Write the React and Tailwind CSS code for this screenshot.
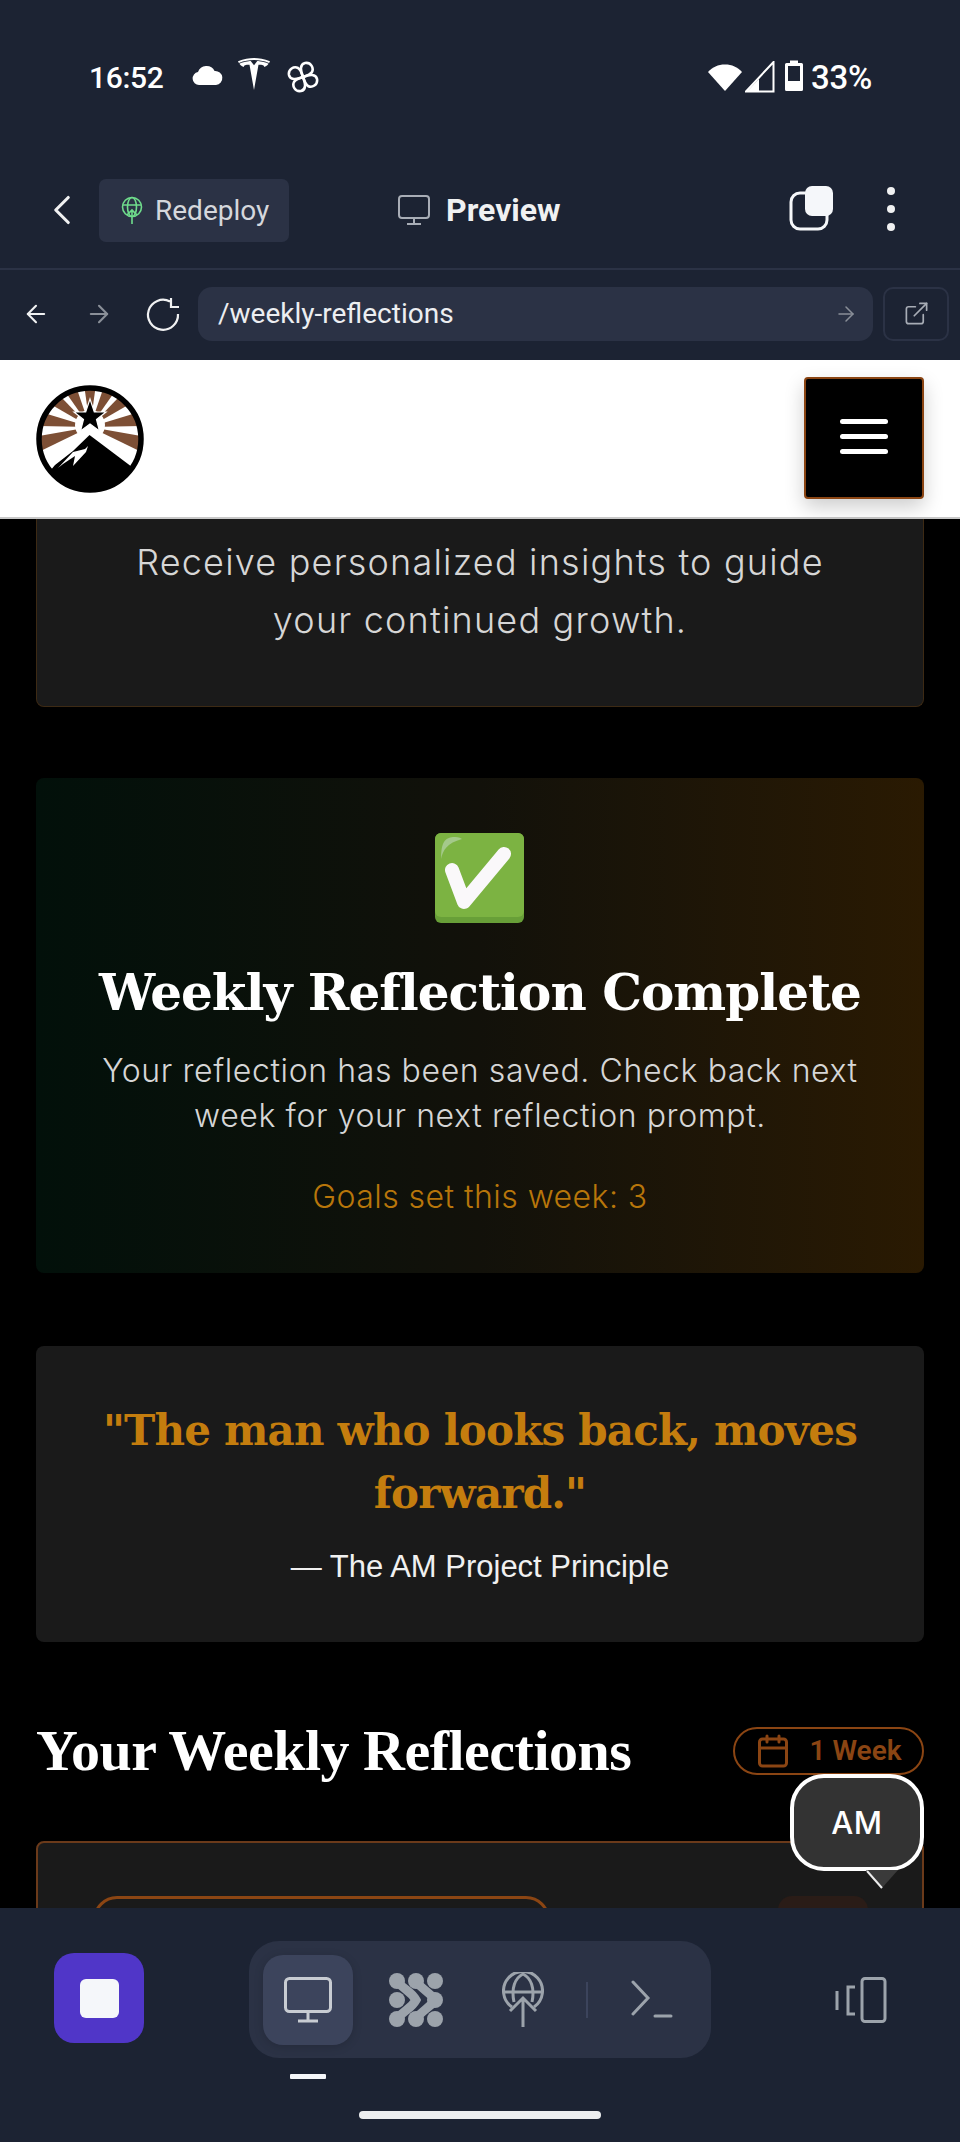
import React from "react";
import { SiTesla } from "react-icons/si";
import { ChevronLeft, ArrowLeft, ArrowRight, ExternalLink, Calendar } from "lucide-react";

const rays = [0, 27, -27, 52, -52, 81, -81, 108, -108];
const petal = "M16 16C13 9 13 3 18 2C24 1 27 7 25 11C23 14 19 15 16 16Z";

function rayPath(deg) {
  // wedge from the point behind the star out past the ring
  const toXY = (a) => {
    const r = ((a - 90) * Math.PI) / 180;
    return `${54 + 80 * Math.cos(r)} ${42 + 80 * Math.sin(r)}`;
  };
  return `M54 42L${toXY(deg - 8)}L${toXY(deg + 8)}Z`;
}

function Logo() {
  return (
    <svg width="108" height="108" viewBox="0 0 108 108">
      <defs>
        <clipPath id="disc">
          <circle cx="54" cy="54" r="51" />
        </clipPath>
      </defs>
      <circle cx="54" cy="54" r="51" fill="#fff" />
      <g clipPath="url(#disc)">
        {rays.map((d) => (
          <path key={d} d={rayPath(d)} fill="#7d4f35" />
        ))}
        <circle cx="54" cy="40" r="15" fill="#fff" />
        <path d="M54 44L100 81V110H6V86L54 44Z" fill="#fff" />
        <path d="M53.500 50L96 82V110H8V84L14 86L19 80L37 66Z" fill="#000" />
        <path d="M22 83L37 67L49 64L52 61L50 67L37 81L39 71L27 79Z" fill="#fff" />
      </g>
      <circle cx="54" cy="54" r="51" fill="none" stroke="#000" strokeWidth="5.500" />
      <path
        d="M54 14L58.300 27H70L60.500 34.500L63.500 46L54 39L44.500 46L47.500 34.500L38 27H49.700Z"
        fill="#000"
        stroke="#fff"
        strokeWidth="1.200"
      />
    </svg>
  );
}

function StatusBar() {
  return (
    <div className="h-[155px] flex justify-between pl-[89px] pr-[88px] pt-[59px] text-white font-['Roboto',sans-serif] text-[30px] leading-[38px]">
      <div className="flex items-start">
        <span className="font-medium tracking-[-0.3px]">16:52</span>
        <svg width="32" height="32" viewBox="0 0 32 32" className="ml-[27px]">
          <path d="M8 26a6.500 6.500 0 0 1-1-12.900A9 9 0 0 1 23.600 12 7 7 0 0 1 25 26Z" fill="#fff" />
        </svg>
        <SiTesla size={32} color="#fff" className="ml-[15px] -mt-[1px]" />
        <svg width="32" height="32" viewBox="0 0 32 32" fill="none" stroke="#fff" strokeWidth="2.600" className="ml-[17px] mt-[2px]">
          <path d={petal} />
          <path d={petal} transform="rotate(90 16 16)" />
          <path d={petal} transform="rotate(180 16 16)" />
          <path d={petal} transform="rotate(270 16 16)" />
        </svg>
      </div>
      <div className="flex items-start">
        <svg width="36" height="30" viewBox="0 0 36 30" className="mt-[3px]">
          <path d="M18 29L1 10C5.500 5 11 2.500 18 2.500C25 2.500 30.500 5 35 10Z" fill="#fff" />
        </svg>
        <svg width="30" height="32" viewBox="0 0 30 32" className="mt-[2px] ml-[2px]">
          <path d="M1 30.500H28.500V1Z" fill="none" stroke="#fff" strokeWidth="2" />
          <path d="M2 30.500L14 18V30.500Z" fill="#fff" />
        </svg>
        <svg width="20" height="32" viewBox="0 0 20 32" className="mt-[1px] ml-[9px]">
          <path d="M6 3V0.500H14V3H17.500A1.500 1.500 0 0 1 19 4.500V29.500A1.500 1.500 0 0 1 17.500 31H2.500A1.500 1.500 0 0 1 1 29.500V4.500A1.500 1.500 0 0 1 2.500 3Z" fill="#fff" />
          <rect x="4" y="6" width="12" height="15" fill="#1c2333" />
        </svg>
        <span className="ml-[7px] text-[33px] font-medium tracking-[-0.3px]">33%</span>
      </div>
    </div>
  );
}

function TopBar() {
  return (
    <div className="relative h-[115px] flex items-start pt-[24px] border-b-[2px] border-[#2b3245]">
      <ChevronLeft size={50} strokeWidth={1.500} color="#f0f1f2" className="ml-[37px] mt-[6px]" />
      <div className="ml-[12px] w-[190px] h-[63px] rounded-[7px] bg-[#2b3245] flex items-center pl-[21px] gap-[11px]">
        <svg width="24" height="30" viewBox="0 0 24 30" fill="none" stroke="#6fdc8c" strokeWidth="1.600">
          <circle cx="12" cy="11" r="9.500" />
          <ellipse cx="12" cy="11" rx="4.500" ry="9.500" />
          <path d="M2.500 9H21.500M12 28V14M7 19L12 14L17 19" />
        </svg>
        <span className="text-[28px] text-[#d5d7dc] font-['Roboto',sans-serif]">Redeploy</span>
      </div>
      <div className="ml-[109px] mt-[7px] flex items-center gap-[16px]">
        <svg width="32" height="32" viewBox="0 0 32 32" fill="none" stroke="#a8adb6" strokeWidth="2">
          <rect x="1" y="2" width="30" height="22" rx="3" />
          <path d="M16 24V30M9 30H23" />
        </svg>
        <span className="text-[32px] font-bold text-[#f0f1f2] font-['Roboto',sans-serif]">Preview</span>
      </div>
      <svg width="46" height="46" viewBox="0 0 46 46" className="absolute left-[789px] top-[30px]">
        <rect x="2" y="8" width="36" height="36" rx="9" fill="none" stroke="#f5f7fa" strokeWidth="3" />
        <rect x="16" y="1" width="28" height="30" rx="7" fill="#f5f7fa" />
      </svg>
      <div className="absolute left-[887px] top-[32px] flex flex-col gap-[10px]">
        <div className="w-[8px] h-[8px] rounded-full bg-[#f0f1f2]" />
        <div className="w-[8px] h-[8px] rounded-full bg-[#f0f1f2]" />
        <div className="w-[8px] h-[8px] rounded-full bg-[#f0f1f2]" />
      </div>
    </div>
  );
}

function UrlBar() {
  return (
    <div className="h-[88px] flex items-center pl-[22px] pr-[10px] pb-[1px]">
      <ArrowLeft size={28} strokeWidth={1.800} color="#f0f1f2" />
      <ArrowRight size={28} strokeWidth={1.800} color="#8a8f98" className="ml-[35px]" />
      <svg width="36" height="36" viewBox="0 0 36 36" fill="none" stroke="#f0f1f2" strokeWidth="2.200" className="ml-[32px]">
        <path d="M25 5.500A15 15 0 1 0 33 18M26 2V11H34" />
      </svg>
      <div className="ml-[17px] w-[675px] h-[54px] rounded-[14px] bg-[#2b3245] flex items-center justify-between pl-[20px] pr-[15px]">
        <span className="text-[28px] text-[#eceef1] font-['Roboto',sans-serif]">/weekly-reflections</span>
        <ArrowRight size={24} strokeWidth={1.500} color="#8a8f98" />
      </div>
      <div className="ml-[10px] w-[66px] h-[54px] rounded-[10px] border-[2px] border-[#2b3245] flex items-center justify-center">
        <ExternalLink size={27} strokeWidth={1.500} color="#a8adb6" />
      </div>
    </div>
  );
}

function AppHeader() {
  return (
    <div className="h-[159px] bg-white border-b-[2px] border-[#c8c8c8] flex items-center justify-between pl-[36px] pr-[36px] shrink-0">
      <Logo />
      <div className="w-[120px] h-[122px] bg-black border-[2px] border-[#8b4513] rounded-[4px] shadow-[0_8px_20px_rgba(0,0,0,0.2)] flex flex-col items-center gap-[10px] pt-[40px] mt-[-1px]">
        <div className="w-[48px] h-[5px] rounded-full bg-white" />
        <div className="w-[48px] h-[5px] rounded-full bg-white" />
        <div className="w-[48px] h-[5px] rounded-full bg-white" />
      </div>
    </div>
  );
}

function CheckEmoji() {
  return (
    <svg width="90" height="90" viewBox="0 0 90 90">
      <rect x="0" y="0" width="89" height="90" rx="6" fill="#689f38" />
      <rect x="0" y="0" width="89" height="84" rx="6" fill="#7cb342" />
      <path d="M18 4C10 5 6 9 6 26C8 17 12 10 27 6C24 4 21 4 18 4Z" fill="#a4c98a" />
      <path d="M17 37L29 69L69 21" fill="none" stroke="#faf8fa" strokeWidth="14" strokeLinecap="round" strokeLinejoin="round" />
    </svg>
  );
}

function Content() {
  return (
    <div className="relative flex-1 overflow-hidden bg-black px-[36px] flex flex-col">
      {/* first card is scrolled under the header, no top edge visible */}
      <div className="h-[188px] shrink-0 bg-[#1a1a1a] border-x border-b border-[#3d2a14] rounded-b-[8px] pt-[14px] text-center text-[#d6d6d6] font-['Inter',sans-serif] font-light text-[36px] leading-[58px] tracking-[1.2px]">
        <p>Receive personalized insights to guide</p>
        <p>your continued growth.</p>
      </div>

      <div className="mt-[71px] h-[495px] shrink-0 rounded-[8px] bg-gradient-to-r from-[#02100a] via-[#12110a] to-[#2a1a02] pt-[55px] text-center flex flex-col items-center">
        <CheckEmoji />
        <h2 className="mt-[38px] text-[50px] leading-[64px] font-bold text-white font-['DejaVu_Serif',serif] tracking-[-1px]">Weekly Reflection Complete</h2>
        <p className="mt-[23px] text-[32px] leading-[45px] text-[#d6d6d6] font-['Inter',sans-serif] font-light tracking-[0.6px]">
          Your reflection has been saved. Check back next<br />week for your next reflection prompt.
        </p>
        <p className="mt-[36px] text-[32px] leading-[45px] text-[#b8760a] font-['Inter',sans-serif] font-light tracking-[0.45px]">Goals set this week: 3</p>
      </div>

      <div className="mt-[73px] h-[296px] shrink-0 rounded-[8px] bg-[#1a1a1a] pt-[53px] text-center">
        <p className="text-[42px] leading-[63px] font-bold text-[#c47d0e] font-['DejaVu_Serif',serif] tracking-[-0.8px]">
          "The man who looks back, moves<br />forward."
        </p>
        <p className="mt-[22px] text-[31px] leading-[40px] text-[#f0f0f0] font-['Liberation_Sans',sans-serif]">— The AM Project Principle</p>
      </div>

      <div className="mt-[85px] h-[48px] shrink-0 flex items-center justify-between">
        <h2 className="text-[58px] leading-[64px] font-bold text-white font-['Liberation_Serif',serif] tracking-[-0.5px]">Your Weekly Reflections</h2>
        <div className="w-[191px] h-[48px] rounded-full border-[2px] border-[#8b4513] flex items-center justify-center gap-[18px] text-[#8b4513] text-[28px] font-semibold font-['Roboto',sans-serif]">
          <Calendar size={36} strokeWidth={2} />
          <span>1 Week</span>
        </div>
      </div>

      <div className="mt-[66px] h-[200px] shrink-0 rounded-[8px] bg-[#1a1a1a] border-[2px] border-[#6b3a1a] pt-[53px] pl-[55px] pr-[54px] flex justify-between">
        <div className="w-[457px] h-[60px] rounded-t-[24px] border-[3px] border-[#8b4513]" />
        <div className="w-[90px] h-[60px] rounded-[14px] bg-[#2a1c17]" />
      </div>

      {/* floating help bubble */}
      <div className="absolute left-[790px] top-[1255px] w-[134px] h-[97px] rounded-[34px] border-[4px] border-white bg-[#333333] flex items-center justify-center text-white text-[31px] font-medium font-['Inter',sans-serif] tracking-[0.5px] pt-[2px]">
        AM
      </div>
      <svg width="32" height="22" viewBox="0 0 32 22" className="absolute left-[866px] top-[1351px]">
        <path d="M0 0H32L16 18Z" fill="#3a3a3a" />
        <path d="M1 1L16 18" stroke="#ececec" strokeWidth="2" />
      </svg>
    </div>
  );
}

function BottomNav() {
  return (
    <div className="relative h-[234px] shrink-0 bg-[#1c2333]">
      <div className="absolute left-[54px] top-[45px] w-[90px] h-[90px] rounded-[20px] bg-[#5036c8] flex items-center justify-center">
        <div className="w-[39px] h-[39px] rounded-[6px] bg-[#f5f7fa]" />
      </div>
      <div className="absolute left-[249px] top-[33px] w-[462px] h-[117px] rounded-[30px] bg-[#2b3245] flex items-center pl-[14px]">
        <div className="w-[90px] h-[90px] rounded-[20px] bg-[#3c445c] shadow-[0_2px_10px_rgba(0,0,0,0.15)] flex items-center justify-center">
          <svg width="48" height="46" viewBox="0 0 48 46" fill="none" stroke="#c8ccd2" strokeWidth="3">
            <rect x="1.500" y="1.500" width="45" height="33" rx="4" />
            <path d="M24 35V44M14 44H34" />
          </svg>
        </div>
        <svg width="54" height="54" viewBox="0 0 54 54" className="ml-[36px]" fill="none">
          <g fill="#9ca3ab">
            <circle cx="8" cy="8" r="8" /><circle cx="27" cy="8" r="8" /><circle cx="46" cy="8" r="8" />
            <circle cx="8" cy="27" r="8" /><circle cx="46" cy="27" r="8" />
            <circle cx="8" cy="46" r="8" /><circle cx="27" cy="46" r="8" /><circle cx="46" cy="46" r="8" />
          </g>
          <path d="M8 8C16 18 22 18 27 27C22 36 16 36 8 46M27 8C34 18 40 18 46 27C40 36 34 36 27 46" stroke="#9ca3ab" strokeWidth="9" />
        </svg>
        <svg width="42" height="56" viewBox="0 0 42 56" fill="none" stroke="#9ca3ab" strokeWidth="3" className="ml-[59px]">
          <path d="M10 35A19.500 19.500 0 1 1 32 35" />
          <path d="M12 30C9 16 13 6 21 2C29 6 33 16 30 30M2 20H40M21 55V26M8 39L21 26L34 39" />
        </svg>
        <div className="ml-[42px] w-[2px] h-[36px] bg-[#3c445c]" />
        <svg width="42" height="40" viewBox="0 0 42 40" fill="none" stroke="#9ca3ab" strokeWidth="3" strokeLinecap="round" className="ml-[43px]">
          <path d="M2 2L17 18L2 34M24 36H40" />
        </svg>
      </div>
      <svg width="52" height="46" viewBox="0 0 52 46" fill="none" stroke="#9ca3ab" strokeWidth="3" className="absolute left-[835px] top-[69px]">
        <rect x="27" y="1.500" width="23" height="43" rx="3" />
        <path d="M20 10H13V37H20M2 14V33" />
      </svg>
      <div className="absolute left-[290px] top-[166px] w-[36px] h-[5px] rounded-[1px] bg-[#f5f7fa]" />
      <div className="absolute left-[359px] top-[203px] w-[242px] h-[8px] rounded-full bg-[#eceef0]" />
    </div>
  );
}

export default function App() {
  return (
    <div className="w-[960px] h-[2142px] overflow-hidden bg-[#1c2333] flex flex-col">
      <div className="h-[360px] shrink-0 bg-[#1c2333]">
        <StatusBar />
        <TopBar />
        <UrlBar />
      </div>
      <AppHeader />
      <Content />
      <BottomNav />
    </div>
  );
}
